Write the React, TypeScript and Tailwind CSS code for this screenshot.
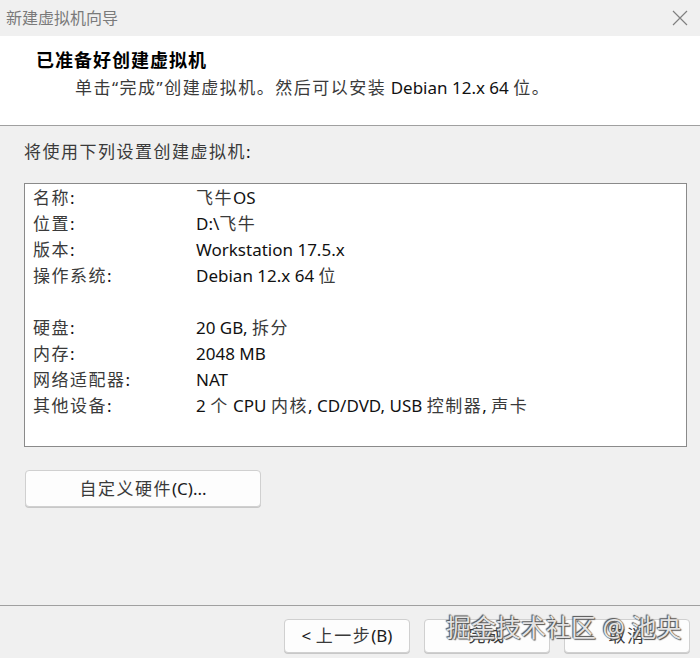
import React from "react";

const rows: { label: string; value: string }[] = [
  { label: "名称:", value: "飞牛OS" },
  { label: "位置:", value: "D:\\飞牛" },
  { label: "版本:", value: "Workstation 17.5.x" },
  { label: "操作系统:", value: "Debian 12.x 64 位" },
  { label: "", value: "" },
  { label: "硬盘:", value: "20 GB, 拆分" },
  { label: "内存:", value: "2048 MB" },
  { label: "网络适配器:", value: "NAT" },
  { label: "其他设备:", value: "2 个 CPU 内核, CD/DVD, USB 控制器, 声卡" },
];

// CJK glyphs in the dialog are drawn a bit wider and lighter than the Latin ones
function Mixed({ text }: { text: string }) {
  const parts = text.split(/([\u3000-\u9fff\uff00-\uffef“”]+)/);
  return (
    <>
      {parts.map((p, i) =>
        /[\u3000-\u9fff\uff00-\uffef“”]/.test(p) ? (
          <span key={i} className="tracking-[1.5px] text-[#3a3a3a]">
            {p}
          </span>
        ) : (
          <span key={i}>{p}</span>
        )
      )}
    </>
  );
}

function WinButton({ children, className = "" }: { children: React.ReactNode; className?: string }) {
  return (
    <button
      className={
        "h-[34px] rounded-[4px] border border-[#d0d0d0] bg-[#fdfdfd] text-[17px] text-[#1b1b1b] shadow-[0_1px_0_#c8c8c8] " +
        className
      }
    >
      {children}
    </button>
  );
}

export default function App() {
  return (
    <div
      className="relative w-[700px] h-[658px] overflow-hidden bg-[#f0f0f0] text-[#111] flex flex-col"
      style={{ fontFamily: '"Noto Sans", "Noto Sans CJK SC", sans-serif' }}
    >
      {/* Title bar */}
      <div className="h-[36px] shrink-0 flex items-center justify-between pl-[6px] pr-[12px]">
        <span className="text-[16px] text-[#7a7a7a]">新建虚拟机向导</span>
        <svg width="16" height="16" viewBox="0 0 16 16" className="text-[#808080]">
          <path d="M1 1 L15 15 M15 1 L1 15" stroke="currentColor" strokeWidth="1.2" fill="none" />
        </svg>
      </div>

      {/* Header */}
      <div className="h-[90px] shrink-0 bg-white border-b border-[#a0a0a0] pt-[11px] pl-[36px]">
        <div className="text-[18px] font-bold leading-[26px] text-black tracking-[1px]">已准备好创建虚拟机</div>
        <div className="pl-[39px] mt-[2px] text-[17px] leading-[26px]">
          <Mixed text="单击“完成”创建虚拟机。然后可以安装 Debian 12.x 64 位。" />
        </div>
      </div>

      {/* Body */}
      <div className="flex-1 flex flex-col px-[24px]">
        <div className="mt-[13px] text-[17px] leading-[26px]">
          <Mixed text="将使用下列设置创建虚拟机:" />
        </div>
        <div className="mt-[18px] w-[663px] h-[264px] bg-white border border-[#8a8a8a] py-[1px] pl-[8px]">
          {rows.map((r, i) => (
            <div key={i} className="h-[26px] flex items-center text-[17px]">
              <span className="w-[163px]">
                <Mixed text={r.label} />
              </span>
              <span>
                <Mixed text={r.value} />
              </span>
            </div>
          ))}
        </div>
        <WinButton className="mt-[23px] ml-[1px] w-[236px] h-[37px]">
          <Mixed text="自定义硬件(C)..." />
        </WinButton>
      </div>

      {/* Footer */}
      <div className="h-[53px] shrink-0 border-t border-[#a0a0a0] flex items-start justify-end gap-[14px] pt-[13px] pr-[10px]">
        <WinButton className="w-[126px]">
          &lt; <Mixed text="上一步" />(B)
        </WinButton>
        <WinButton className="w-[126px]">
          <Mixed text="完成" />
        </WinButton>
        <WinButton className="w-[126px]">
          <Mixed text="取消" />
        </WinButton>
      </div>

      {/* Watermark */}
      <div
        className="absolute left-[446px] top-[609px] whitespace-nowrap text-[25px] leading-[36px] text-white/85"
        style={{ textShadow: "0 0 1px #444, 1px 1px 1px #555, -1px -1px 1px #555" }}
      >
        掘金技术社区 @ 池央
      </div>
    </div>
  );
}
